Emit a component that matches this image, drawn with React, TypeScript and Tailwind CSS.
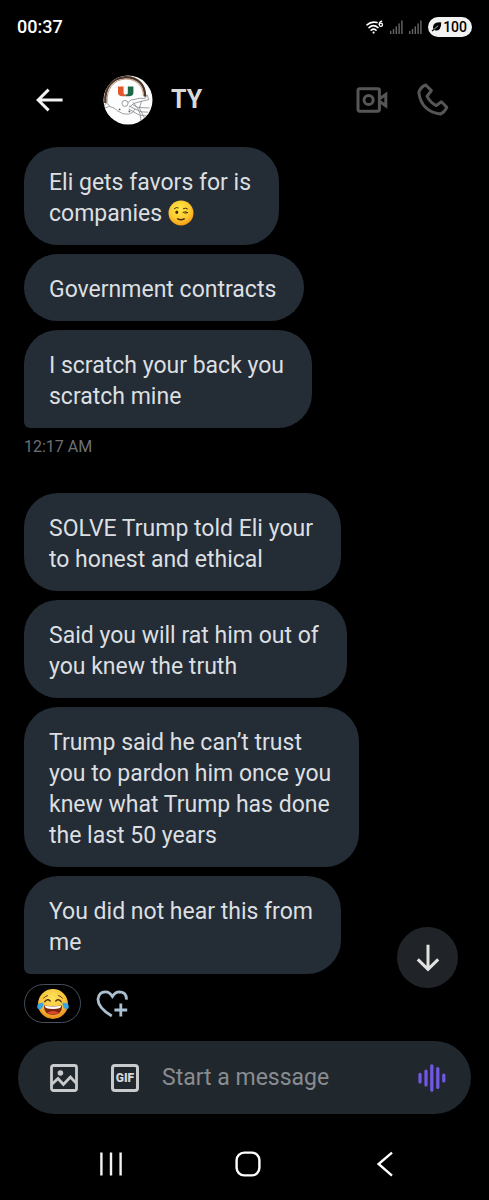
import { useState } from "react";

interface MessageGroup {
  id: string;
  messages: string[];
  time?: string;
}

const groups: MessageGroup[] = [
  {
    id: "first",
    messages: [
      "Eli gets favors for is\ncompanies 😉",
      "Government contracts",
      "I scratch your back you\nscratch mine",
    ],
    time: "12:17 AM",
  },
  {
    id: "second",
    messages: [
      "SOLVE Trump told Eli your\nto honest and ethical",
      "Said you will rat him out of\nyou knew the truth",
      "Trump said he can’t trust\nyou to pardon him once you\nknew what Trump has done\nthe last 50 years",
      "You did not hear this from\nme",
    ],
  },
];

function WinkEmoji() {
  return (
    <svg viewBox="0 0 26 26" className="inline-block h-[26px] w-[26px] align-[-5px]" role="img" aria-label="😉">
      <defs>
        <radialGradient id="wink-face" cx="0.45" cy="0.35" r="0.65">
          <stop offset="0" stopColor="#ffe94a" />
          <stop offset="0.65" stopColor="#fdc92f" />
          <stop offset="1" stopColor="#f79a13" />
        </radialGradient>
      </defs>
      <circle cx="13" cy="13" r="12.5" fill="url(#wink-face)" />
      <ellipse cx="8.8" cy="12.2" rx="1.4" ry="1.7" fill="#4a2b0c" />
      <g fill="none" stroke="#4a2b0c" strokeWidth="1" strokeLinecap="round">
        <path d="M6.4 8.6Q8.2 6.8 10.2 7.8" />
        <path d="M15.4 8.6Q17.4 7.4 19.4 8.8" />
        <path d="M15 12.4Q17.6 11 19.8 12.6L17 13.2" />
        <path d="M9.6 18.8Q13 20.6 16.2 18.8" strokeWidth="1.4" />
      </g>
    </svg>
  );
}

function JoyEmoji() {
  return (
    <svg viewBox="0 0 34 32" className="h-8 w-[34px]" role="img" aria-label="😂">
      <defs>
        <radialGradient id="joy-face" cx="0.48" cy="0.3" r="0.72">
          <stop offset="0" stopColor="#fce45c" />
          <stop offset="0.6" stopColor="#f7c13a" />
          <stop offset="1" stopColor="#e8851b" />
        </radialGradient>
      </defs>
      <circle cx="17" cy="16" r="15" fill="url(#joy-face)" />
      <g fill="none" stroke="#5b330f" strokeWidth="1.5" strokeLinecap="round">
        <path d="M8.8 13.6Q11.4 10.2 14.2 13" />
        <path d="M19.8 13Q22.6 10.2 25.2 13.6" />
        <path d="M7.6 10.2Q9 8 11.4 7.6" strokeWidth="1" />
        <path d="M22.6 7.6Q25 8 26.4 10.2" strokeWidth="1" />
      </g>
      <path d="M7.8 17.6Q17 19 26.2 17.6Q26 27 17 27Q8 27 7.8 17.6Z" fill="#7a2512" />
      <path d="M8.6 17.8Q17 19 25.4 17.8Q25.2 21 17 21Q8.8 21 8.6 17.8Z" fill="#fff" />
      <path d="M11.2 24.4Q17 21.4 22.8 24.4Q21 26.6 17 26.6Q13 26.6 11.2 24.4Z" fill="#d9482c" />
      <path d="M7.6 14.8Q1.6 14.4 1.2 18.2Q1 21.4 4 21.2Q7.2 20.6 7.6 14.8Z" fill="#3aa5df" />
      <path d="M26.4 14.8Q32.4 14.4 32.8 18.2Q33 21.4 30 21.2Q26.8 20.6 26.4 14.8Z" fill="#3aa5df" />
    </svg>
  );
}

function Avatar() {
  return (
    <svg viewBox="0 0 50 50" className="h-[50px] w-[50px]" role="img" aria-label="TY">
      <clipPath id="avatar-clip">
        <circle cx="25" cy="25" r="24.5" />
      </clipPath>
      <g clipPath="url(#avatar-clip)">
        <rect width="50" height="50" fill="#fdfdfd" />
        <path d="M2.4 28C1 13 9 2.4 22.6 2.2C35 2 42.4 10 42 21.6" fill="none" stroke="#4b3528" strokeWidth="2.4" />
        <path d="M4.2 27.6C3 14.4 10.6 4.4 22.6 4C33 3.8 40.4 11 40.4 21" fill="none" stroke="#a97858" strokeWidth="0.8" />
        <path d="M15 11.6H20.6V18.2Q20.6 19.4 22.8 19.4V21.2H19.4Q15 21.2 15 17.4Z" fill="#e4572e" />
        <path d="M24.8 11.6H30.4V17.4Q30.4 21.2 26 21.2H22.8V19.4Q24.8 19.4 24.8 18.2Z" fill="#1d6648" />
        <g fill="none" stroke="#85888d" strokeWidth="0.8">
          <path d="M1.2 31.4Q2.8 25.6 6.2 30.6Q5.4 32.4 2 33M6.2 31.4Q11 32 14.8 36Q19.6 39.8 25.4 39.2Q30.6 38.2 32 34" />
          <circle cx="22" cy="28.4" r="3" />
          <path d="M25 27.6Q28.2 23.8 31 24.6Q36 22.6 42 23.4L44 19.8L45.8 24.6L38.6 26.2L30.8 28.4L26.4 32.2" />
          <path d="M26 31L38 36.8L45 37.2M25.6 34L36.2 40L44 41" />
          <path d="M30 27.4L34.6 33L37 38.6L38 46M38.6 26.2L36.4 33L42 44" />
          <path d="M29.6 29.6L34.6 32.4L46.4 33" />
        </g>
        <circle cx="16.6" cy="34.4" r="0.9" fill="#55585c" />
        <circle cx="26.4" cy="36.4" r="0.9" fill="#55585c" />
      </g>
    </svg>
  );
}

function SignalIcon() {
  return (
    <svg viewBox="0 0 13 14" className="h-[14px] w-[13px]" fill="#666" aria-hidden="true">
      <rect x="0" y="11" width="1.4" height="3" />
      <rect x="2.8" y="9" width="1.4" height="5" />
      <rect x="5.6" y="6.4" width="1.4" height="7.6" />
      <rect x="8.4" y="3.4" width="1.4" height="10.6" />
      <rect x="11.2" y="0.4" width="1.4" height="13.6" />
    </svg>
  );
}

function StatusBar() {
  return (
    <div className="flex h-[54px] items-center justify-between px-[17px] text-white">
      <span className="text-lg font-medium">00:37</span>
      <div className="flex items-center gap-[6px]">
        <svg viewBox="0 0 18 14" className="h-[14px] w-[18px]" fill="none" stroke="#fff" strokeLinecap="round" aria-label="Wi-Fi 6" role="img">
          <path d="M1 4.8Q5.4 0.9 11 2.6" strokeWidth="1.6" />
          <path d="M3 7.6Q7.4 3.8 12 7.6" strokeWidth="1.6" />
          <path d="M5.2 10.2Q7.6 8.2 10 10.2" strokeWidth="1.6" />
          <circle cx="7.6" cy="12.6" r="1.1" fill="#fff" stroke="none" />
          <path d="M15.8 1.2Q13.2 2 13.2 4.6" strokeWidth="1.3" />
          <circle cx="14.9" cy="4.8" r="1.6" strokeWidth="1.3" />
        </svg>
        <SignalIcon />
        <SignalIcon />
        <span className="flex h-5 items-center gap-px rounded-full bg-[#f2f2f2] pl-[3px] pr-[5px] text-sm font-medium text-black">
          <svg viewBox="0 0 10 10" className="h-[10px] w-[11px]" aria-hidden="true">
            <path d="M9.8 0.4Q2.4 0 1.6 4.2Q1.2 6 2 7L0.2 8.6L0.8 9.4L2.8 8Q6 9.6 8.2 7Q9.8 4.8 9.8 0.4Z" fill="#000" />
            <path d="M2.4 7.4L6.6 3.8" stroke="#f2f2f2" strokeWidth="0.7" />
          </svg>
          100
        </span>
      </div>
    </div>
  );
}

function ChatHeader() {
  return (
    <header className="mb-[2px] flex h-[91px] items-center pl-9 pr-10">
      <button type="button" aria-label="Back">
        <svg viewBox="0 0 28 24" className="h-6 w-7" fill="none" stroke="#f2f2f2" strokeWidth="3">
          <path d="M26.6 12H2.4M12.6 1.6L2.2 12L12.6 22.4" />
        </svg>
      </button>
      <div className="ml-[39px] flex items-center gap-[18px]">
        <Avatar />
        <h1 className="text-[25px] font-bold text-[#d9d9d9]">TY</h1>
      </div>
      <div className="ml-auto flex items-center gap-[29px]">
        <button type="button" aria-label="Video call">
          <svg viewBox="0 0 32 26" className="h-[26px] w-8" fill="none" stroke="#565656" strokeWidth="3">
            <rect x="2" y="1.8" width="21.4" height="22.4" rx="1.6" />
            <circle cx="12.6" cy="13" r="4.6" />
            <path d="M24 11.4L29.8 7.4V18.8L24 14.8" />
          </svg>
        </button>
        <button type="button" aria-label="Call">
          <svg viewBox="0 0 32 33" className="h-[33px] w-8" fill="none" stroke="#565656" strokeWidth="3" strokeLinejoin="round">
            <path d="M8.8 2L14.4 7.6L10 13.2Q13 19.4 19.2 22.6L24.4 18.8L29.8 24.2Q27.6 29.4 23.4 31Q4.4 28.6 1.8 9.4Q3.6 3.8 8.8 2Z" />
          </svg>
        </button>
      </div>
    </header>
  );
}

function Bubble({ text, last }: { text: string; last: boolean }) {
  const parts = text.split("😉");

  return (
    <p
      className={`w-fit whitespace-pre-line bg-[#242d35] pb-4 pl-[25px] pr-7 pt-5 text-[23px] leading-[31px] text-[#dcdfe1] ${
        last ? "rounded-[34px] rounded-bl-md" : "rounded-[34px]"
      }`}
    >
      {parts[0]}
      {parts.length > 1 && <WinkEmoji />}
    </p>
  );
}

function Composer() {
  const [draft, setDraft] = useState("");

  return (
    <form className="mx-[18px] flex h-[73px] items-center rounded-full bg-[#21282d] pl-8 pr-[25px]" onSubmit={(e) => e.preventDefault()}>
      <button type="button" aria-label="Add photo">
        <svg viewBox="0 0 28 28" className="h-7 w-7" fill="none" stroke="#c9cacc" strokeWidth="2.8">
          <rect x="1.5" y="1.5" width="25" height="25" rx="2" />
          <circle cx="10.4" cy="9" r="2.8" fill="#c9cacc" stroke="none" />
          <path d="M1.6 20.6L8 14.6L13.4 20.4L20.4 13L26.6 19.6" />
        </svg>
      </button>
      <button type="button" aria-label="Add GIF" className="ml-[33px] flex h-7 w-7 items-center justify-center rounded border-[3px] border-[#c9cacc] text-xs font-black leading-none text-[#d4d5d7]">
        GIF
      </button>
      <input
        type="text"
        aria-label="Message"
        placeholder="Start a message"
        value={draft}
        onChange={(e) => setDraft(e.target.value)}
        className="ml-[23px] min-w-0 flex-1 bg-transparent pt-0.5 text-[23px] text-white outline-none placeholder:text-[#898c91]"
      />
      <button type="button" aria-label="Record voice message">
        <svg viewBox="0 0 28 28" className="h-7 w-7" fill="none" stroke="#7358e8" strokeWidth="3.2" strokeLinecap="round">
          <path d="M2 10.4V18M8 7V21M13.8 1.8V26.2M19.8 4.6V23.4M25.8 11V17" />
        </svg>
      </button>
    </form>
  );
}

function NavigationBar() {
  return (
    <nav className="mt-auto flex h-[73px] items-center justify-around pl-[42px] pr-9">
      <button type="button" aria-label="Recent apps">
        <svg viewBox="0 0 26 26" className="h-[26px] w-[26px]" stroke="#f2f2f2" strokeWidth="2.4">
          <path d="M3.4 1.6V24.4M13 1.6V24.4M22.6 1.6V24.4" />
        </svg>
      </button>
      <button type="button" aria-label="Home">
        <svg viewBox="0 0 26 26" className="h-[26px] w-[26px]" fill="none" stroke="#fff" strokeWidth="2.4">
          <rect x="1.6" y="1.6" width="22.8" height="22.8" rx="7.6" />
        </svg>
      </button>
      <button type="button" aria-label="Back">
        <svg viewBox="0 0 26 26" className="h-[26px] w-[26px]" fill="none" stroke="#fff" strokeWidth="2.4">
          <path d="M20 1.6L6.6 13L20 24.6" />
        </svg>
      </button>
    </nav>
  );
}

export default function App() {
  return (
    <div className="flex min-h-screen flex-col bg-black font-['Roboto',sans-serif]">
      <StatusBar />
      <ChatHeader />

      {/* Conversation */}
      <main className="relative px-6">
        {groups.map((group) => (
          <section key={group.id} className="flex flex-col gap-[9px]">
            {group.messages.map((message, index) => (
              <Bubble key={message} text={message} last={index === group.messages.length - 1} />
            ))}
            {group.time && <time className="mb-9 text-base leading-5 text-[#6d7175]">{group.time}</time>}
          </section>
        ))}

        <div className="mt-[10px] flex items-center gap-[15px] pb-[18px]">
          <button type="button" aria-label="Laughing reaction" className="flex h-[39px] w-[57px] items-center justify-center rounded-full border border-[#46515a]">
            <JoyEmoji />
          </button>
          <button type="button" aria-label="Add reaction">
            <svg viewBox="0 0 32 28" className="h-7 w-8" fill="none" stroke="#aabfcf" strokeWidth="2.8">
              <path d="M15.8 26Q1.8 17.6 2 9.2Q2.8 1.8 9.4 1.8Q13.6 1.8 16.4 6.4Q19.2 1.8 23.6 1.8Q30.6 2 30.4 9.6" />
              <path d="M24.8 13.4V26.4M18.4 20H31.2" />
            </svg>
          </button>
        </div>

        <button
          type="button"
          aria-label="Scroll to latest message"
          className="absolute bottom-[53px] right-[31px] flex h-[61px] w-[61px] items-center justify-center rounded-full bg-[#202327]"
        >
          <svg viewBox="0 0 24 28" className="h-7 w-6" fill="none" stroke="#e1e1e1" strokeWidth="3">
            <path d="M12 0.8V25M1.8 15.4L12 25.4L22.2 15.4" />
          </svg>
        </button>
      </main>

      <Composer />
      <NavigationBar />
    </div>
  );
}
